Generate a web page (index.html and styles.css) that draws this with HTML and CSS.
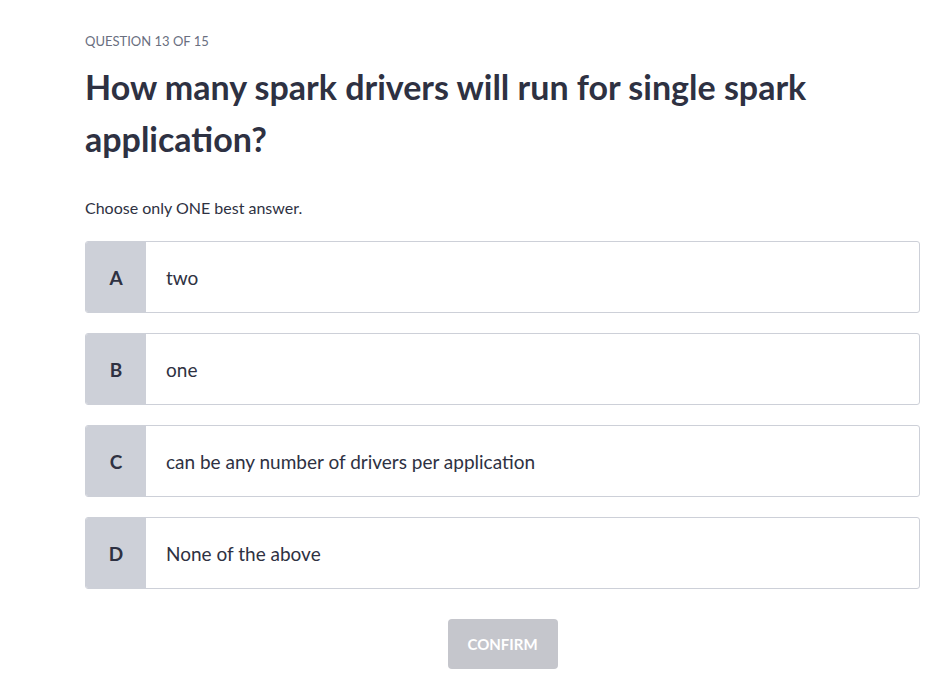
FILE: index.html
```html
<!DOCTYPE html>
<html lang="en">
<head>
<meta charset="utf-8">
<link rel="stylesheet" href="styles.css">
</head>
<body>
<main class="quiz">
  <div class="counter">QUESTION 13 OF 15</div>
  <h1 class="question">How many spark drivers will run for single spark application?</h1>
  <p class="hint">Choose only ONE best answer.</p>
  <ul class="options">
    <li class="option"><span class="letter">A</span><span class="text">two</span></li>
    <li class="option"><span class="letter">B</span><span class="text">one</span></li>
    <li class="option"><span class="letter">C</span><span class="text">can be any number of drivers per application</span></li>
    <li class="option"><span class="letter">D</span><span class="text">None of the above</span></li>
  </ul>
  <div class="actions"><button class="confirm" type="button">CONFIRM</button></div>
</main>
</body>
</html>
```
FILE: styles.css
```css
* { box-sizing: border-box; }
html, body { margin: 0; padding: 0; background: #fff; }
body {
  font-family: Lato, "Liberation Sans", sans-serif;
  color: #2e3142;
}
.quiz {
  width: 835px;
  margin-left: 85px;
  padding-top: 32px;
}
.counter {
  font-size: 13px;
  line-height: 18px;
  color: #6a6f7f;
}
.question {
  margin: 11px 0 0;
  font-size: 34px;
  line-height: 52px;
  font-weight: 700;
  color: #2e3142;
  width: 740px;
}
.hint {
  margin: 33px 0 0;
  font-size: 16px;
  line-height: 20px;
}
.options {
  list-style: none;
  margin: 23px 0 0;
  padding: 0;
  display: flex;
  flex-direction: column;
  gap: 20px;
}
.option {
  display: flex;
  height: 72px;
  border: 1px solid #cdd0d8;
  border-radius: 3px;
  overflow: hidden;
}
.letter {
  width: 60px;
  flex: none;
  background: #cdd0d8;
  display: flex;
  align-items: center;
  justify-content: center;
  font-size: 19px;
  font-weight: 700;
}
.text {
  display: flex;
  align-items: center;
  padding-left: 20px;
  font-size: 19px;
}
.actions {
  display: flex;
  justify-content: center;
  margin-top: 30px;
}
.confirm {
  width: 110px;
  height: 50px;
  border: 0;
  border-radius: 4px;
  background: #c5c6cc;
  color: #fff;
  font-family: inherit;
  font-size: 15px;
  font-weight: 700;
}
```
